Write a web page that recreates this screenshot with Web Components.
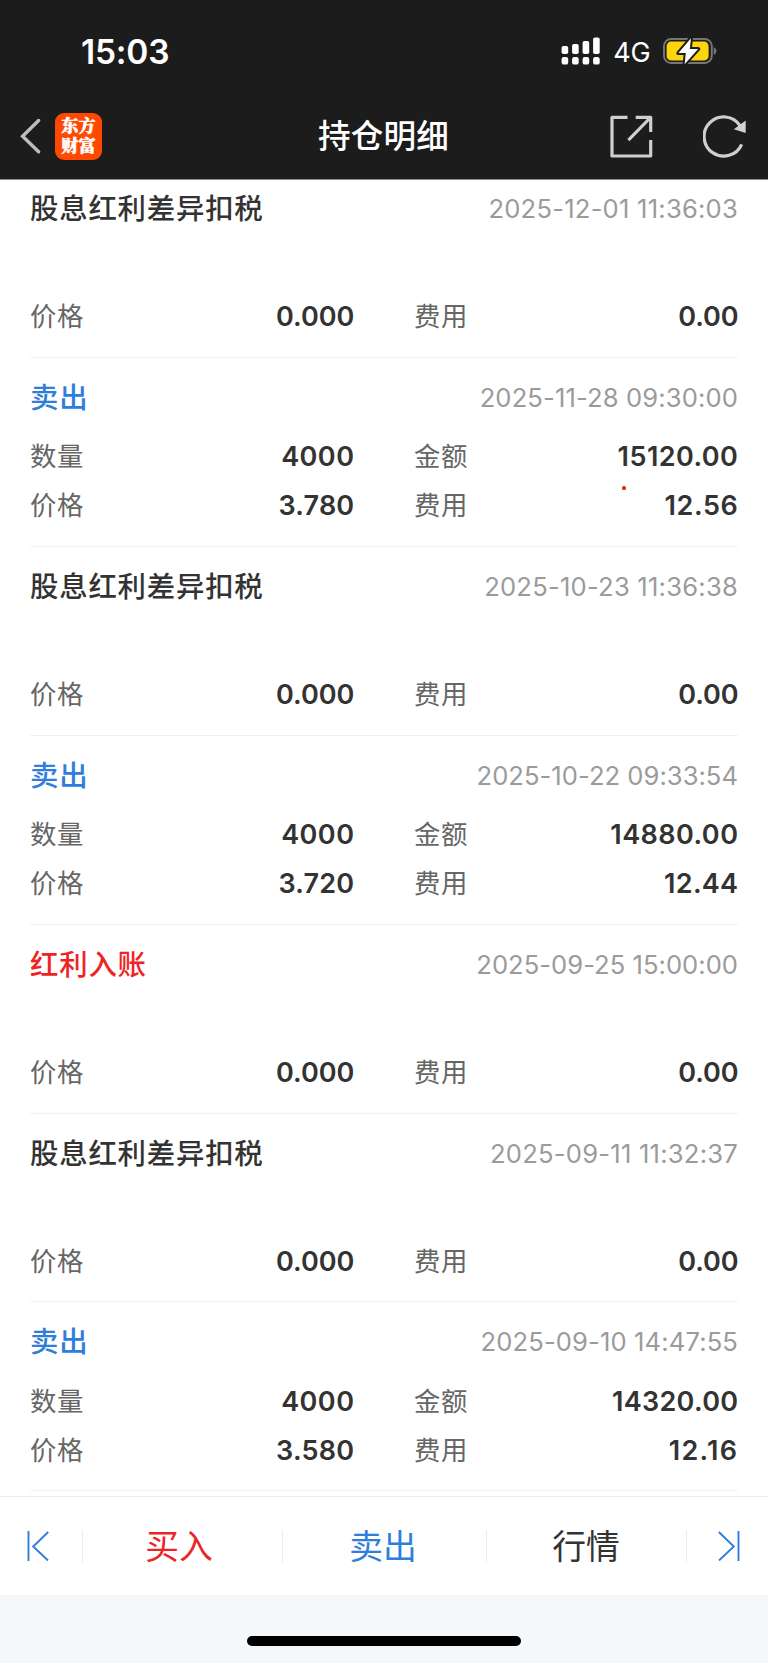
<!DOCTYPE html>
<html lang="zh-CN">
<head>
<meta charset="utf-8">
<meta name="viewport" content="width=device-width">
<title>持仓明细</title>
<style>
html,body{margin:0;padding:0;background:#fff}
body{font-family:Inter,"Noto Sans CJK SC",sans-serif;color:#333}
</style>
</head>
<body>
<holding-page></holding-page>
<script>
const define = (name, html, setup) => {
  const tpl = document.createElement('template');
  tpl.innerHTML = html;
  customElements.define(name, class extends HTMLElement {
    constructor() {
      super();
      this.attachShadow({ mode: 'open' }).append(tpl.content.cloneNode(true));
    }
    connectedCallback() { if (setup) setup(this, this.shadowRoot); }
  });
};

define('status-bar', `
<style>
:host{display:flex;height:102px;box-sizing:border-box;padding:0 51.5px 0 81px;align-items:center;color:#fff}
.time{font-size:33.5px;font-weight:600;letter-spacing:-.2px;line-height:40px;flex:1;padding-top:2px}
.net{font-size:27px;letter-spacing:-.2px;line-height:30px;margin:0 12px 0 12px;padding-top:3px}
svg{display:block}
</style>
<span class="time">15:03</span>
<svg width="40" height="28" viewBox="0 0 40 28" fill="#fff">
<rect x=".6" y="9" width="6.6" height="8" rx="1.8"/><rect x="11.1" y="7" width="6.6" height="10" rx="1.8"/><rect x="21.6" y="4" width="6.6" height="13" rx="1.8"/><rect x="32.1" y="0.5" width="6.6" height="16.5" rx="1.8"/>
<rect x=".6" y="20" width="6.6" height="7.6" rx="2.2"/><rect x="11.1" y="20" width="6.6" height="7.6" rx="2.2"/><rect x="21.6" y="20" width="6.6" height="7.6" rx="2.2"/><rect x="32.1" y="20" width="6.6" height="7.6" rx="2.2"/>
</svg>
<span class="net">4G</span>
<svg width="54" height="28" viewBox="0 0 54 28">
<rect x="1" y="2" width="47.8" height="24" rx="7" fill="none" stroke="#77777a" stroke-width="1.9"/>
<path d="M50.7 10.2c3.6 1 3.6 6.6 0 7.6z" fill="#77777a"/>
<rect x="3.6" y="4.6" width="42" height="18.8" rx="4.4" fill="#fcd50b"/>
<path d="M28 1.2 15.4 16.1h7.4L21.6 27.2 35.2 11.9h-8.4z" fill="#fff" stroke="#1c1c1c" stroke-width="4" stroke-linejoin="round" paint-order="stroke"/>
</svg>`);

define('app-logo', `
<style>
:host{display:flex;flex-direction:column;justify-content:center;align-items:center;width:47px;height:47px;border-radius:9px;background:#ff4800;color:#fff;font:900 17.2px/20px "Liberation Sans","Noto Serif CJK SC","Noto Sans CJK SC",sans-serif;-webkit-text-stroke:.5px #fff}
span{display:block;height:20px}
</style><span>东方</span><span>财富</span>`);

define('nav-bar', `
<style>
:host{display:grid;grid-template-columns:1fr auto 1fr;align-items:center;height:77px;padding:0 22px 8.5px 20px;border-bottom:1px solid #8b8b8b;box-sizing:border-box}
.l,.r{display:flex;align-items:center}
.r{justify-content:flex-end;gap:50px}
.l{gap:14px}
h1{margin:0;font-size:32.6px;font-weight:500;line-height:48px;color:#fff;letter-spacing:.2px;padding-left:1px}
svg{display:block}
</style>
<div class="l"><svg width="21" height="36" viewBox="0 0 21 36" fill="none" stroke="#bdbdbd" stroke-width="3.4" stroke-linecap="round"><path d="M18.6 2.5 2.6 18.2 18.6 33.8" stroke-linejoin="miter"/></svg><app-logo></app-logo></div>
<h1>持仓明细</h1>
<div class="r">
<svg width="43" height="43" viewBox="0 0 43 43" fill="none" stroke="#cfcfcf" stroke-width="3.2" stroke-linejoin="round"><path d="M17.5 2.3H2V41H40.7V25M25.7 2.3H40.7V17M40 3 18.4 25.2"/></svg>
<svg width="43" height="43" viewBox="0 0 43 43"><path d="M38.7 29.3A19.6 19.6 0 1 1 37 10.6" fill="none" stroke="#cfcfcf" stroke-width="3.2"/><path d="M42.7 5.6 30.8 14.3 42.7 18z" fill="#d2d2d2"/></svg>
</div>`);

define('data-pair', `
<style>
:host{display:flex;justify-content:space-between;align-items:center;height:49.3px}
.k{font-size:26.4px;font-weight:400;letter-spacing:.6px;color:#666;padding-bottom:4px}
.v{font-size:27px;font-weight:600;letter-spacing:.45px;margin-right:-.4px;color:#333}
</style><span class="k"></span><span class="v"></span>`, (el, root) => {
  const value = el.getAttribute('value');
  const v = root.querySelector('.v');
  root.querySelector('.k').textContent = el.getAttribute('label');
  v.textContent = value;
  const tracking = { '0.000': 0, '0.00': -.1, '3.780': .2, '3.720': .2, '3.580': .25, '12.16': 1.3, '12.56': .6, '12.44': .3, '14320.00': .32 };
  if (value in tracking) v.style.letterSpacing = tracking[value] + 'px';
});

define('trade-record', `
<style>
:host{display:block;height:188.92px;box-sizing:border-box;padding-top:20px;border-bottom:1px solid #f1f1f1}
header{display:flex;justify-content:space-between;align-items:center;height:39px;margin-bottom:15px}
h2{margin:0;font-size:28.4px;font-weight:500;letter-spacing:.8px;line-height:39px}
:host([kind=sell]) h2{color:#2f7edc}
:host([kind=bonus]) h2{color:#ee2424}
time{font-size:25.6px;color:#9b9b9b;line-height:39px}
.grid{display:grid;grid-template-columns:324px 324px;grid-template-rows:49.3px 49.3px;column-gap:60px}
</style>
<header><h2><slot></slot></h2><time></time></header>
<div class="grid"></div>`, (el, root) => {
  const time = root.querySelector('time');
  time.textContent = el.getAttribute('time');
  time.style.letterSpacing = el.getAttribute('tracking') + 'px';
  const [qty, amount, price, fee] = el.getAttribute('data').split(',');
  const grid = root.querySelector('.grid');
  const add = (label, value) => {
    const p = document.createElement(value ? 'data-pair' : 'span');
    if (value) { p.setAttribute('label', label); p.setAttribute('value', value); }
    grid.append(p);
  };
  add('数量', qty); add('金额', amount); add('价格', price); add('费用', fee);
});

define('record-list', `
<style>
:host{display:block;height:1316px;overflow:hidden;background:#fff;position:relative}
.inner{margin:-11px 30px 0}
.dot{position:absolute;left:622px;top:306px;width:4px;height:4px;border-radius:1.5px;background:#dc3220}
</style><div class="inner"><slot></slot></div><i class="dot"></i>`);

define('action-bar', `
<style>
:host{display:flex;align-items:center;height:99px;box-sizing:border-box;border-top:1px solid #ededed;background:#fff;font-size:33.8px;line-height:48px}
div{display:flex;justify-content:center;align-items:center;height:33px;box-sizing:border-box}
div+div{border-left:1px solid #ececec}
span{padding-top:2px}
.s{width:82px}.a{width:200px}.b{width:204px}.c{width:200px}.e{width:82px}
.a{color:#ee2424;padding-right:7px}.b{color:#2f7edc;padding-right:3px}.c{color:#333;padding-right:1px}
svg{display:block}
</style>
<div class="s"><svg width="22" height="30" viewBox="0 0 22 30" fill="none" stroke="#2f7edc" stroke-width="1.9" style="margin-right:7px"><path d="M1.5 0v30M21.2 1 6.2 15.5 21 29.5"/></svg></div>
<div class="a"><span>买入</span></div><div class="b"><span>卖出</span></div><div class="c"><span>行情</span></div>
<div class="e"><svg width="22" height="30" viewBox="0 0 22 30" fill="none" stroke="#2f7edc" stroke-width="1.9" style="margin-left:2px"><path d="M20.5 0v30M.8 1l15 14.5L1 29.5"/></svg></div>`);

define('home-indicator', `
<style>
:host{display:flex;justify-content:center;height:68px;background:#f4f8fa;box-sizing:border-box;padding-top:41px}
i{width:274px;height:10px;border-radius:5px;background:#000}
</style><i></i>`);

define('holding-page', `
<style>
:host{display:flex;flex-direction:column;width:768px;height:1663px;overflow:hidden}
.top{background:#1c1c1c;height:180px;display:flex;flex-direction:column}
nav-bar{flex:1}
</style>
<div class="top"><status-bar></status-bar><nav-bar></nav-bar></div>
<record-list>
<trade-record tracking=".22" time="2025-12-01 11:36:03" data=",,0.000,0.00">股息红利差异扣税</trade-record>
<trade-record tracking=".12" kind="sell" time="2025-11-28 09:30:00" data="4000,15120.00,3.780,12.56">卖出</trade-record>
<trade-record tracking=".22" time="2025-10-23 11:36:38" data=",,0.000,0.00">股息红利差异扣税</trade-record>
<trade-record tracking=".02" kind="sell" time="2025-10-22 09:33:54" data="4000,14880.00,3.720,12.44">卖出</trade-record>
<trade-record tracking=".02" kind="bonus" time="2025-09-25 15:00:00" data=",,0.000,0.00">红利入账</trade-record>
<trade-record tracking=".22" time="2025-09-11 11:32:37" data=",,0.000,0.00">股息红利差异扣税</trade-record>
<trade-record tracking=".12" kind="sell" time="2025-09-10 14:47:55" data="4000,14320.00,3.580,12.16">卖出</trade-record>
</record-list>
<action-bar></action-bar>
<home-indicator></home-indicator>`);
</script>
</body>
</html>
